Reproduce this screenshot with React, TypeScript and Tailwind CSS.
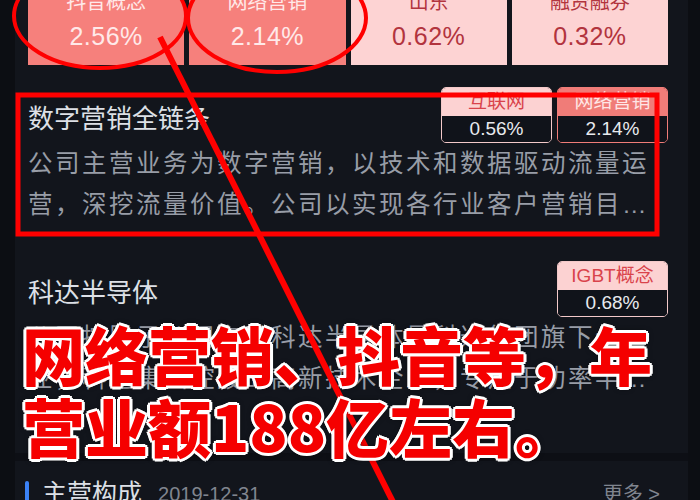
import React from 'react';

const cells = [
  { label: '抖音概念', value: '2.56%', hot: true },
  { label: '网络营销', value: '2.14%', hot: true },
  { label: '山东', value: '0.62%', hot: false },
  { label: '融资融券', value: '0.32%', hot: false },
];

interface TagProps {
  name: string;
  value: string;
  hot?: boolean;
}

function Tag({ name, value, hot }: TagProps) {
  return (
    <div
      className={`flex w-[111px] flex-col overflow-hidden rounded-[5px] border-[1.5px] ${
        hot ? 'border-[#f07c78]' : 'border-[#f3c9c9]'
      }`}
    >
      <div
        className={`flex h-[28px] items-center justify-center text-[19px] ${
          hot ? 'bg-[#f07c78] text-[#ffe6e6]' : 'bg-[#fcd2d2] text-[#d9434b]'
        }`}
      >
        {name}
      </div>
      <div className="flex h-[26px] items-center justify-center bg-[#10131a] text-[19px] text-[#e8eaee]">
        {value}
      </div>
    </div>
  );
}

interface CardProps {
  title: string;
  desc: string;
  tags: TagProps[];
}

function Card({ title, desc, tags }: CardProps) {
  return (
    <div className="pt-[22px] pb-[14px]">
      <div className="flex items-start justify-between">
        <div className="pt-[15px] text-[26px] leading-[34px] text-[#dde0e6]">{title}</div>
        <div className="flex gap-[5px]">
          {tags.map((t) => (
            <Tag key={t.name} {...t} />
          ))}
        </div>
      </div>
      <p className="line-clamp-2 pr-[10px] text-[24.5px] leading-[41px] tracking-[2.5px] text-[#989da7]">
        {desc}
      </p>
    </div>
  );
}

const shadow =
  '[text-shadow:3px_0_0_#fff,-3px_0_0_#fff,0_3px_0_#fff,0_-3px_0_#fff,2px_2px_0_#fff,-2px_-2px_0_#fff,2px_-2px_0_#fff,-2px_2px_0_#fff,0_0_6px_#000]';

export default function App() {
  return (
    <div
      className="relative flex h-[500px] w-[700px] overflow-hidden bg-[#0b0d12]"
      style={{ fontFamily: '"Liberation Sans", "Noto Sans CJK SC", sans-serif' }}
    >
      {/* left strip */}
      <div className="w-[15px] shrink-0 bg-[#0c0e13]" />

      {/* main column */}
      <div className="flex w-[673px] shrink-0 flex-col bg-[#12151c]">
        <div className="pl-[13px] pr-[20px]">
          {/* top concept cells */}
          <div className="mt-[-18px] grid grid-cols-4 gap-[5px]">
            {cells.map((c) => (
              <div
                key={c.label}
                className={`flex h-[83px] flex-col items-center pt-[8px] ${
                  c.hot ? 'bg-[#f6807c] text-[#ffe9e9]' : 'bg-[#fdd3d3] text-[#b2343e]'
                }`}
              >
                <div className="text-[20px] leading-[24px]">{c.label}</div>
                <div className="mt-[7px] text-[25px] leading-[30px] tracking-[0.5px]">{c.value}</div>
              </div>
            ))}
          </div>

          <Card
            title="数字营销全链条"
            desc="公司主营业务为数字营销，以技术和数据驱动流量运营，深挖流量价值。公司以实现各行业客户营销目标为核心，提供全链条服务。"
            tags={[
              { name: '互联网', value: '0.56%' },
              { name: '网络营销', value: '2.14%', hot: true },
            ]}
          />
          <Card
            title="科达半导体"
            desc="公司控股子公司东营科达半导体是科达集团旗下企业，科达集团控股的高新技术企业，专注于功率半导体研发与生产。"
            tags={[{ name: 'IGBT概念', value: '0.68%' }]}
          />
        </div>

        {/* divider */}
        <div className="mt-[40px] h-[8px] shrink-0 bg-[#0d0f15]" />

        {/* main composition header */}
        <div className="flex items-center pl-[10px] pr-[28px] pt-[14px]">
          <div className="h-[26px] w-[4px] rounded-sm bg-[#3b82f6]" />
          <div className="ml-[13px] text-[25px] text-[#dde0e6]">主营构成</div>
          <div className="ml-[16px] text-[20px] text-[#80858f]">2019-12-31</div>
          <div className="ml-auto text-[20px] text-[#80858f]">更多 &gt;</div>
        </div>
      </div>

      {/* right strip */}
      <div className="flex-1 bg-[#0c0e13]" />

      {/* annotations */}
      <svg className="pointer-events-none absolute inset-0" width="700" height="500" viewBox="0 0 700 500">
        <ellipse cx="100" cy="16" rx="86" ry="52" fill="none" stroke="#ff0000" strokeWidth="4" />
        <ellipse cx="277" cy="18" rx="89" ry="54" fill="none" stroke="#ff0000" strokeWidth="4" />
        <rect x="18" y="95" width="639" height="139" fill="none" stroke="#ff0000" strokeWidth="5" />
        <line x1="160" y1="37" x2="393" y2="502" stroke="#ff0000" strokeWidth="6" />
      </svg>

      <div
        className={`pointer-events-none absolute left-[22px] top-[317px] text-[63px] font-black leading-[72px] text-[#f50000] ${shadow}`}
        style={{ fontFamily: '"Noto Sans CJK SC", sans-serif' }}
      >
        <div>网络营销、抖音等，年</div>
        <div>营业额188亿左右。</div>
      </div>
    </div>
  );
}
